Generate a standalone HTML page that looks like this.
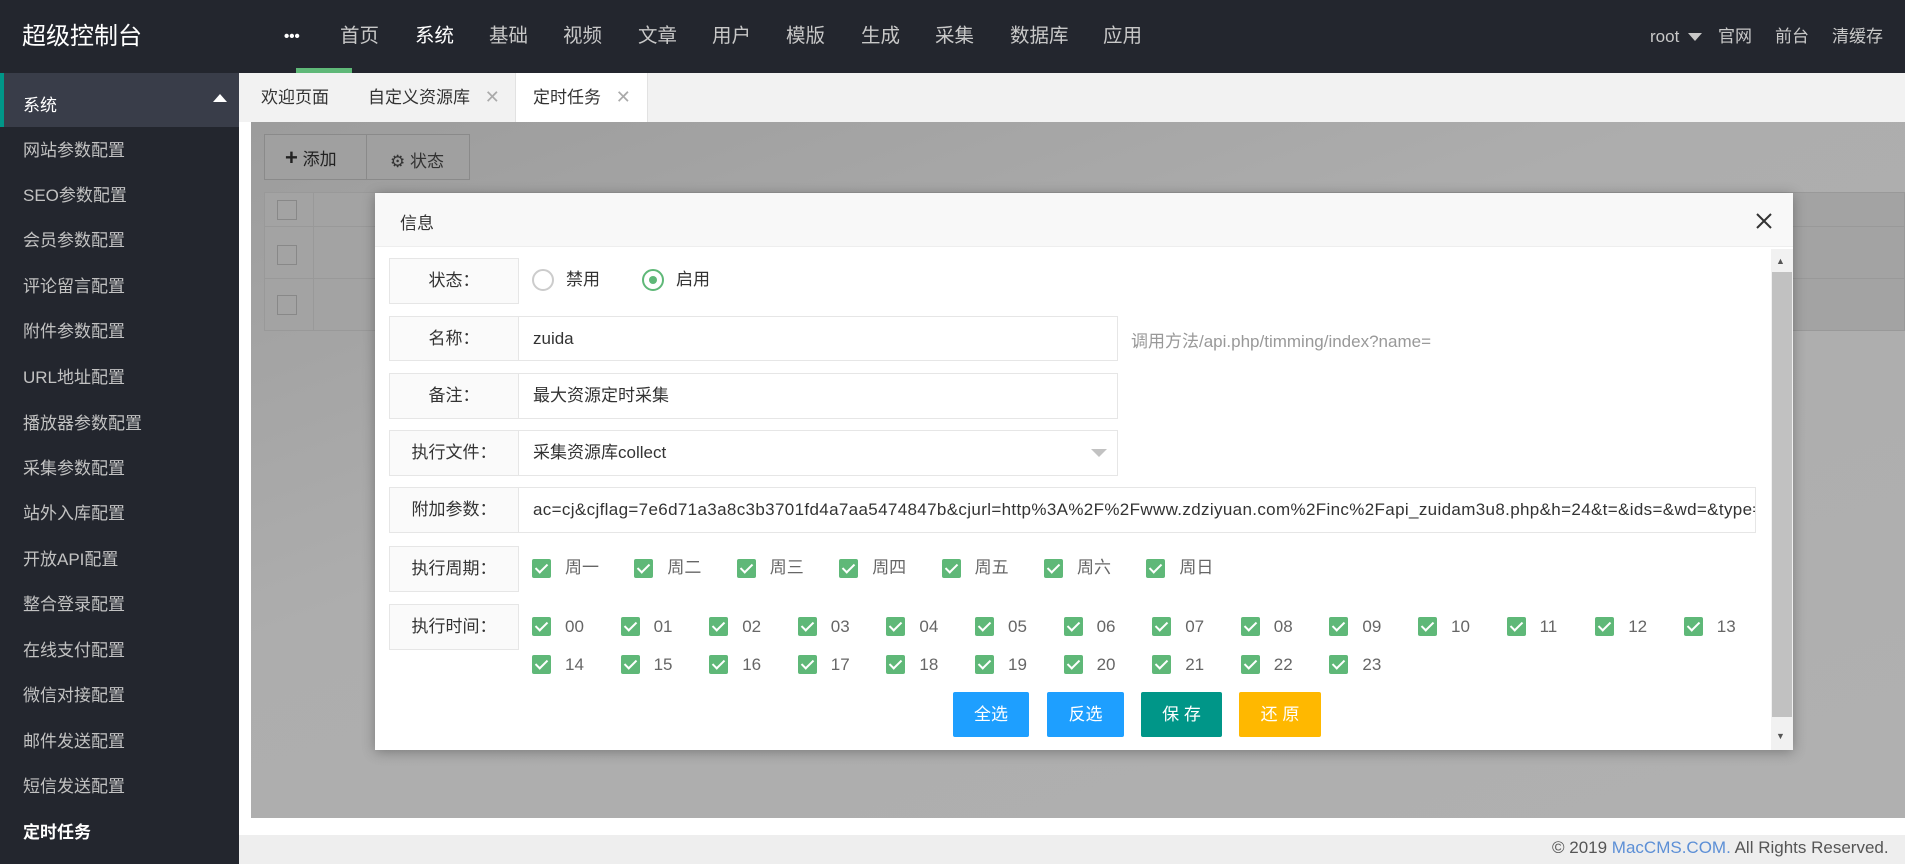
<!DOCTYPE html>
<html><head><meta charset="utf-8"><style>
*{margin:0;padding:0;box-sizing:border-box}
body{width:1905px;height:864px;overflow:hidden;position:relative;background:#fff;font-family:"Liberation Sans","Noto Sans CJK SC",sans-serif;font-size:17px;color:#333}
.abs{position:absolute}
#top{left:0;top:0;width:1905px;height:73px;background:#23262e}
.nav{top:0;height:73px;line-height:73px;font-size:19.5px;color:#c8c8c8;white-space:nowrap}
#side{left:0;top:73px;width:239px;height:791px;background:#23262e;z-index:2}
.si{left:23px;font-size:17px;color:#c2c2c2;line-height:20px;z-index:3}
#tabs{left:239px;top:73px;width:1666px;height:49px;background:#f2f2f2}
.tab{top:73px;height:49px;line-height:49px;font-size:17px;color:#333}
.x{color:#aaa;font-size:18px}
#content{left:251px;top:122px;width:1654px;height:696px;background:linear-gradient(160deg,#9c9c9c,#adadad 40%,#b0b0b0)}
#foot{left:0;top:835px;width:1905px;height:29px;background:#eee}
#modal{left:375px;top:193px;width:1418px;height:557px;background:#fff;box-shadow:0 2px 12px rgba(0,0,0,.3)}
.lab{left:14px;width:130px;background:#fafafa;border:1px solid #e6e6e6;text-align:center;font-size:17px;color:#333}
.inp{left:143px;width:600px;background:#fff;border:1px solid #e6e6e6;padding-left:14px;font-size:17px;color:#333;white-space:nowrap;overflow:hidden}
.cb{width:19px;height:19px;background:#5fb878;border-radius:2px}
.cb:after{content:"";position:absolute;left:6px;top:2px;width:5px;height:10px;border:solid #fff;border-width:0 2px 2px 0;transform:rotate(45deg)}
.ct{font-size:17px;color:#666;line-height:20px}
.btn{top:499px;height:45px;line-height:45px;color:#fff;text-align:center;font-size:17px;border-radius:2px}
</style></head><body>
<div id="top" class="abs"></div>
<div class="abs" style="left:22px;top:0;line-height:73px;font-size:24px;color:#fff">超级控制台</div>
<div class="abs nav" style="left:284px;color:#fff;font-weight:bold;font-size:15px">•••</div>
<div class="abs nav" style="left:340px">首页</div>
<div class="abs nav" style="left:415px;color:#fff">系统</div>
<div class="abs" style="left:296px;top:68px;width:56px;height:5px;background:#5fb878"></div>
<div class="abs nav" style="left:489px">基础</div>
<div class="abs nav" style="left:563px">视频</div>
<div class="abs nav" style="left:638px">文章</div>
<div class="abs nav" style="left:712px">用户</div>
<div class="abs nav" style="left:786px">模版</div>
<div class="abs nav" style="left:861px">生成</div>
<div class="abs nav" style="left:935px">采集</div>
<div class="abs nav" style="left:1010px">数据库</div>
<div class="abs nav" style="left:1103px">应用</div>
<div class="abs nav" style="left:1650px;font-size:17px">root</div>
<div class="abs" style="left:1688px;top:33px;border-left:7px solid transparent;border-right:7px solid transparent;border-top:8px solid #c8c8c8"></div>
<div class="abs nav" style="left:1718px;font-size:17px">官网</div>
<div class="abs nav" style="left:1775px;font-size:17px">前台</div>
<div class="abs nav" style="left:1832px;font-size:17px">清缓存</div>

<div id="side" class="abs"></div>
<div class="abs" style="left:0;top:73px;width:239px;height:54px;background:#393d49;border-left:4px solid #009688;z-index:3"></div>
<div class="abs" style="left:23px;top:91px;color:#fff;font-size:17px;z-index:4">系统</div>
<div class="abs" style="left:213px;top:94px;width:0;height:0;border-left:7px solid transparent;border-right:7px solid transparent;border-bottom:8px solid #fff;z-index:4"></div>
<div class="abs si" style="top:141px">网站参数配置</div>
<div class="abs si" style="top:186px">SEO参数配置</div>
<div class="abs si" style="top:231px">会员参数配置</div>
<div class="abs si" style="top:277px">评论留言配置</div>
<div class="abs si" style="top:322px">附件参数配置</div>
<div class="abs si" style="top:368px">URL地址配置</div>
<div class="abs si" style="top:414px">播放器参数配置</div>
<div class="abs si" style="top:459px">采集参数配置</div>
<div class="abs si" style="top:504px">站外入库配置</div>
<div class="abs si" style="top:550px">开放API配置</div>
<div class="abs si" style="top:595px">整合登录配置</div>
<div class="abs si" style="top:641px">在线支付配置</div>
<div class="abs si" style="top:686px">微信对接配置</div>
<div class="abs si" style="top:732px">邮件发送配置</div>
<div class="abs si" style="top:777px">短信发送配置</div>
<div class="abs si" style="top:823px;color:#fff;font-weight:bold">定时任务</div>

<div id="tabs" class="abs"></div>
<div class="abs tab" style="left:261px">欢迎页面</div>
<div class="abs tab" style="left:368px">自定义资源库 <span class="x" style="margin-left:10px">✕</span></div>
<div class="abs" style="left:515px;top:73px;width:133px;height:49px;background:#fff;border-left:1px solid #e2e2e2;border-right:1px solid #e2e2e2"></div>
<div class="abs tab" style="left:533px">定时任务 <span class="x" style="margin-left:10px">✕</span></div>

<div id="content" class="abs"></div>
<div class="abs" style="left:264px;top:134px;width:206px;height:46px;border:1px solid #8a8a8a;background:#a0a0a0"></div>
<div class="abs" style="left:366px;top:134px;width:1px;height:46px;background:#8a8a8a"></div>
<div class="abs" style="left:285px;top:145px;font-size:17px;color:#222"><b style="font-size:22px;line-height:20px">+</b> 添加</div>
<div class="abs" style="left:390px;top:147px;font-size:17px;color:#333">⚙ 状态</div>
<div class="abs" style="left:264px;top:192px;width:1641px;height:139px;border:1px solid #999;background:#a3a3a3"></div>
<div class="abs" style="left:264px;top:226px;width:1641px;height:1px;background:#999"></div>
<div class="abs" style="left:264px;top:278px;width:1641px;height:1px;background:#999"></div>
<div class="abs" style="left:313px;top:192px;width:1px;height:139px;background:#999"></div>
<div class="abs" style="left:277px;top:200px;width:20px;height:20px;border:1px solid #888"></div>
<div class="abs" style="left:277px;top:245px;width:20px;height:20px;border:1px solid #888"></div>
<div class="abs" style="left:277px;top:295px;width:20px;height:20px;border:1px solid #888"></div>

<div id="foot" class="abs"></div>
<div class="abs" style="left:1552px;top:838px;font-size:17px;color:#555">© 2019 <span style="color:#5c8fd6">MacCMS.COM.</span> All Rights Reserved.</div>

<div id="modal" class="abs">
 <div class="abs" style="left:0;top:0;width:1418px;height:54px;background:#f8f8f8;border-bottom:1px solid #eee"></div>
 <div class="abs" style="left:25px;top:16px;font-size:17px">信息</div>
 <svg class="abs" style="left:1381px;top:20px" width="16" height="16" viewBox="0 0 16 16"><path d="M1 1L15 15M15 1L1 15" stroke="#333" stroke-width="2"/></svg>
 <div class="abs" style="left:1396px;top:56px;width:22px;height:501px;background:#f1f1f1"></div>
 <div class="abs" style="left:1397px;top:79px;width:20px;height:445px;background:#c1c1c1"></div>
 <div class="abs" style="left:1401px;top:63px;font-size:9px;color:#555">▲</div>
 <div class="abs" style="left:1401px;top:538px;font-size:9px;color:#555">▼</div>

 <div class="abs lab" style="top:65px;height:46px;line-height:44px">状态：</div>
 <div class="abs" style="left:157px;top:76px;width:22px;height:22px;border:2px solid #ccc;border-radius:50%"></div>
 <div class="abs ct" style="left:191px;top:77px;color:#333">禁用</div>
 <div class="abs" style="left:267px;top:76px;width:22px;height:22px;border:2px solid #5fb878;border-radius:50%"></div>
 <div class="abs" style="left:274px;top:83px;width:8px;height:8px;background:#5fb878;border-radius:50%"></div>
 <div class="abs ct" style="left:301px;top:77px;color:#333">启用</div>

 <div class="abs lab" style="top:123px;height:45px;line-height:43px">名称：</div>
 <div class="abs inp" style="top:123px;height:45px;line-height:43px">zuida</div>
 <div class="abs" style="left:756px;top:134px;color:#999;font-size:17px">调用方法/api.php/timming/index?name=</div>

 <div class="abs lab" style="top:180px;height:46px;line-height:44px">备注：</div>
 <div class="abs inp" style="top:180px;height:46px;line-height:44px">最大资源定时采集</div>

 <div class="abs lab" style="top:237px;height:46px;line-height:44px">执行文件：</div>
 <div class="abs inp" style="top:237px;height:46px;line-height:44px">采集资源库collect</div>
 <div class="abs" style="left:716px;top:256px;border-left:8px solid transparent;border-right:8px solid transparent;border-top:8px solid #c2c2c2"></div>

 <div class="abs lab" style="top:294px;height:46px;line-height:44px">附加参数：</div>
 <div class="abs inp" style="top:294px;height:46px;line-height:44px;width:1238px;padding-right:0;letter-spacing:0.35px">ac=cj&amp;cjflag=7e6d71a3a8c3b3701fd4a7aa5474847b&amp;cjurl=http%3A%2F%2Fwww.zdziyuan.com%2Finc%2Fapi_zuidam3u8.php&amp;h=24&amp;t=&amp;ids=&amp;wd=&amp;type=1</div>

 <div class="abs lab" style="top:353px;height:46px;line-height:44px">执行周期：</div>
 <div class="abs lab" style="top:411px;height:46px;line-height:44px">执行时间：</div>
</div>
<div id="cbs"></div>
<script>
var h='';
var days=['周一','周二','周三','周四','周五','周六','周日'];
for(var i=0;i<7;i++){var x=532+i*102.4;h+='<div class="abs cb" style="left:'+x+'px;top:559px"></div><div class="abs ct" style="left:'+(x+33)+'px;top:558px">'+days[i]+'</div>';}
for(var i=0;i<24;i++){var r=i<14?0:1,c=i<14?i:i-14;var x=532+c*88.6,y=r?655:617;var t=(i<10?'0':'')+i;h+='<div class="abs cb" style="left:'+x+'px;top:'+y+'px"></div><div class="abs ct" style="left:'+(x+33)+'px;top:'+(y)+'px">'+t+'</div>';}
document.getElementById('cbs').innerHTML=h;
</script>
<div class="abs btn" style="left:953px;top:692px;width:76px;background:#1e9fff">全选</div>
<div class="abs btn" style="left:1047px;top:692px;width:77px;background:#1e9fff">反选</div>
<div class="abs btn" style="left:1141px;top:692px;width:81px;background:#009688">保 存</div>
<div class="abs btn" style="left:1239px;top:692px;width:82px;background:#ffb800">还 原</div>
</body></html>
